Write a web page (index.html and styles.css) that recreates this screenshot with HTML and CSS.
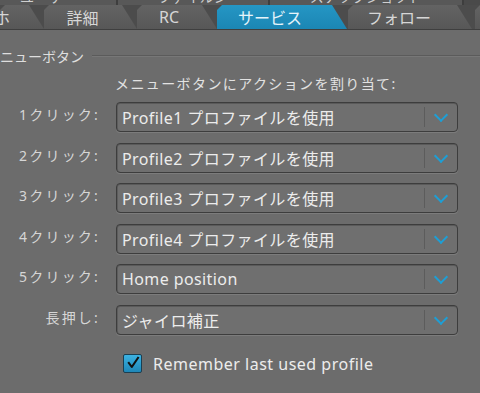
FILE: index.html
```html
<!DOCTYPE html>
<html lang="ja">
<head>
    <meta charset="UTF-8">
    <title>サービス</title>
    <link rel="stylesheet" href="styles.css">
</head>
<body>
    <div class="back-tabs">
        <div class="back-tab">ユーザー</div>
        <div class="back-tab">ファイルジ</div>
        <div class="back-tab">スナップショット</div>
    </div>
    <nav class="tabs">
        <div class="tab tab-first"><span>ホ</span></div>
        <div class="tab tab-detail">詳細</div>
        <div class="tab tab-rc">RC</div>
        <div class="tab tab-active">サービス</div>
        <div class="tab tab-follow">フォロー</div>
        <div class="tab tab-last"></div>
    </nav>

    <main class="panel">
        <div class="group-title">
            <span>メニューボタン</span>
            <div class="group-line"></div>
        </div>

        <p class="hint">メニューボタンにアクションを割り当て:</p>

        <div class="rows">
            <label>1クリック:</label>
            <div class="select"><span>Profile1 プロファイルを使用</span><i></i></div>
            <label>2クリック:</label>
            <div class="select"><span>Profile2 プロファイルを使用</span><i></i></div>
            <label>3クリック:</label>
            <div class="select"><span>Profile3 プロファイルを使用</span><i></i></div>
            <label>4クリック:</label>
            <div class="select"><span>Profile4 プロファイルを使用</span><i></i></div>
            <label>5クリック:</label>
            <div class="select"><span>Home position</span><i></i></div>
            <label>長押し:</label>
            <div class="select"><span>ジャイロ補正</span><i></i></div>
        </div>

        <div class="check-row">
            <span class="checkbox">
                <svg viewBox="0 0 20 20" width="20" height="20">
                    <path d="M4 9 L8.5 15 L17 2.5" fill="none" stroke="#111" stroke-width="2.6" stroke-linejoin="round"/>
                </svg>
            </span>
            <span>Remember last used profile</span>
        </div>
    </main>
</body>
</html>
```

FILE: styles.css
```css
body {
    margin: 0;
    width: 480px;
    height: 393px;
    overflow: hidden;
    background: #6c6c6c;
    color: #e8e8e8;
    font-family: "Noto Sans", "Noto Sans CJK JP", sans-serif;
}

/* second row of tabs, mostly hidden above */
.back-tabs {
    display: flex;
    height: 5px;
    overflow: hidden;
    background: #4a4a4a;
}

.back-tab {
    margin-top: -14px;
    padding: 0 40px;
    height: 19px;
    font-size: 14px;
    color: #cfcfcf;
    background: #585858;
    border-right: 2px solid #3e3e3e;
}

.back-tab:first-child {
    margin-left: -20px;
}

.tabs {
    display: flex;
    height: 24px;
    background: #4c4c4c;
    border-bottom: 1px solid #3f3f3f;
}

.tab {
    flex: none;
    display: flex;
    align-items: center;
    justify-content: center;
    padding-right: 16px;
    box-sizing: border-box;
    font-size: 16px;
    color: #d6d6d6;
    background: linear-gradient(#636363, #575757);
    clip-path: polygon(0 100%, 0 5px, 5px 0, calc(100% - 15px) 0, 100% 100%);
}

.tab-first {
    width: 44px;
    justify-content: flex-start;
    padding: 0;
}

.tab-first span {
    margin-left: -6px;
}

.tab-detail {
    width: 93px;
}

.tab-rc {
    width: 80px;
}

.tab-active {
    width: 130px;
    padding-right: 24px;
    color: #e6f4fa;
    background: linear-gradient(#2596c4, #1b86b4);
}

.tab-follow {
    width: 124px;
    margin-left: 1px;
    padding-right: 22px;
}

.tab-last {
    width: 20px;
    margin-left: 3px;
}

.panel {
    padding-top: 16px;
}

.group-title {
    display: flex;
    align-items: center;
    gap: 8px;
    font-size: 14px;
    color: #dedede;
    margin-left: -14px;
}

.group-line {
    flex: 1;
    height: 1px;
    background: #5b5b5b;
    border-bottom: 1px solid #777;
}

.hint {
    margin: 7px 0 9px 115px;
    font-size: 14px;
    color: #e2e2e2;
    letter-spacing: 1.4px;
}

.rows {
    display: grid;
    grid-template-columns: 100px 342px;
    column-gap: 16px;
    row-gap: 10.6px;
}

.rows label {
    align-self: center;
    text-align: right;
    padding-bottom: 6px;
    font-size: 14px;
    letter-spacing: 2.2px;
    color: #d6d6d6;
}

.select {
    position: relative;
    height: 30px;
    box-sizing: border-box;
    display: flex;
    align-items: center;
    border: 1px solid #3d3d3d;
    border-radius: 4px;
    background: #6f6f6f;
    box-shadow: inset 0 1px 0 #5a5a5a, inset 1px 0 0 #5d5d5d, 0 1px 0 #7c7c7c;
}

.select span {
    flex: 1;
    padding-left: 5px;
    font-size: 16px;
    letter-spacing: 0.4px;
    color: #ececec;
}

.select i {
    width: 32px;
    height: 20px;
    border-left: 1px solid #5c5c5c;
    position: relative;
}

.select i::after {
    content: '';
    position: absolute;
    left: 11px;
    top: 3px;
    width: 8px;
    height: 8px;
    border-right: 2.2px solid #1d9fd6;
    border-bottom: 2.2px solid #1d9fd6;
    transform: rotate(45deg);
}

.check-row {
    display: flex;
    align-items: center;
    gap: 11px;
    margin: 18px 0 0 123px;
    font-size: 16px;
    letter-spacing: 0.5px;
    color: #ececec;
}

.checkbox {
    width: 19px;
    height: 19px;
    box-sizing: border-box;
    border: 1px solid #1a3f52;
    border-radius: 2px;
    background: linear-gradient(#3cb2e2, #1e87b8);
    display: flex;
    align-items: center;
    justify-content: center;
}

.checkbox svg {
    margin-top: -2px;
    margin-left: 1px;
}
```
